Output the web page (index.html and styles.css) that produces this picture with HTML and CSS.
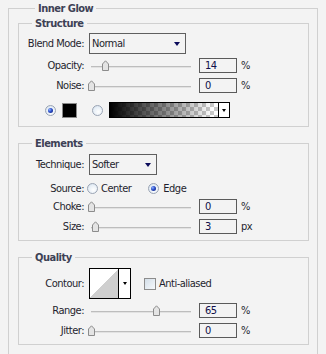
FILE: index.html
```html
<!DOCTYPE html>
<html lang="en">
<head>
    <meta charset="UTF-8">
    <title>Inner Glow</title>
    <link rel="stylesheet" href="styles.css">
</head>
<body>
    <fieldset class="group outer">
        <legend>Inner Glow</legend>

        <fieldset class="group sub structure">
            <legend>Structure</legend>
            <div class="row mt3">
                <span class="lbl">Blend Mode:</span>
                <div class="select wide"><span>Normal</span><i class="arrow"></i></div>
            </div>
            <div class="row mt4">
                <span class="lbl">Opacity:</span>
                <div class="slider"><div class="track"></div><span class="thumb" style="left:14%"><svg width="7" height="11" viewBox="0 0 7 11"><path d="M0.5 10.5V4L3.5 0.8L6.5 4V10.5Z" fill="#e4e4e4" stroke="#8c8c8c"/></svg></span></div>
                <div class="num">14</div><span class="unit">%</span>
            </div>
            <div class="row mt5">
                <span class="lbl">Noise:</span>
                <div class="slider"><div class="track"></div><span class="thumb" style="left:0%"><svg width="7" height="11" viewBox="0 0 7 11"><path d="M0.5 10.5V4L3.5 0.8L6.5 4V10.5Z" fill="#e4e4e4" stroke="#8c8c8c"/></svg></span></div>
                <div class="num">0</div><span class="unit">%</span>
            </div>
            <div class="row colors">
                <span class="radio on"></span>
                <span class="swatch"></span>
                <span class="radio gap"></span>
                <div class="gradient"><span class="ramp"></span><span class="drop"><i class="tri"></i></span></div>
            </div>
        </fieldset>

        <fieldset class="group sub elements">
            <legend>Elements</legend>
            <div class="row mt4">
                <span class="lbl">Technique:</span>
                <div class="select narrow"><span>Softer</span><i class="arrow"></i></div>
            </div>
            <div class="row source">
                <span class="lbl">Source:</span>
                <span class="radio first"></span><span class="opt">Center</span>
                <span class="radio on second"></span><span class="opt">Edge</span>
            </div>
            <div class="row mt4">
                <span class="lbl">Choke:</span>
                <div class="slider"><div class="track"></div><span class="thumb" style="left:0%"><svg width="7" height="11" viewBox="0 0 7 11"><path d="M0.5 10.5V4L3.5 0.8L6.5 4V10.5Z" fill="#e4e4e4" stroke="#8c8c8c"/></svg></span></div>
                <div class="num">0</div><span class="unit">%</span>
            </div>
            <div class="row mt5">
                <span class="lbl">Size:</span>
                <div class="slider"><div class="track"></div><span class="thumb" style="left:4%"><svg width="7" height="11" viewBox="0 0 7 11"><path d="M0.5 10.5V4L3.5 0.8L6.5 4V10.5Z" fill="#e4e4e4" stroke="#8c8c8c"/></svg></span></div>
                <div class="num">3</div><span class="unit">px</span>
            </div>
        </fieldset>

        <fieldset class="group sub quality">
            <legend>Quality</legend>
            <div class="row mt4">
                <span class="lbl">Contour:</span>
                <div class="contour"><span class="curve"></span><span class="drop"><i class="tri"></i></span></div>
                <span class="check"></span><span class="opt">Anti-aliased</span>
            </div>
            <div class="row mt4">
                <span class="lbl">Range:</span>
                <div class="slider"><div class="track"></div><span class="thumb" style="left:65%"><svg width="7" height="11" viewBox="0 0 7 11"><path d="M0.5 10.5V4L3.5 0.8L6.5 4V10.5Z" fill="#e4e4e4" stroke="#8c8c8c"/></svg></span></div>
                <div class="num">65</div><span class="unit">%</span>
            </div>
            <div class="row mt5">
                <span class="lbl">Jitter:</span>
                <div class="slider"><div class="track"></div><span class="thumb" style="left:0%"><svg width="7" height="11" viewBox="0 0 7 11"><path d="M0.5 10.5V4L3.5 0.8L6.5 4V10.5Z" fill="#e4e4e4" stroke="#8c8c8c"/></svg></span></div>
                <div class="num">0</div><span class="unit">%</span>
            </div>
        </fieldset>
    </fieldset>
</body>
</html>
```

FILE: styles.css
```css
body {
    margin: 0;
    padding-top: 2px;
    background-color: #f3f3f3;
    font-family: "DejaVu Sans Condensed", "Liberation Sans", Arial, sans-serif;
    font-stretch: semi-condensed;
    font-size: 11px;
    letter-spacing: -0.5px;
    color: #1f1f2e;
}
.group {
    margin: 0;
    min-width: 0;
    border: 1px solid #d0d0d0;
}
.group legend {
    padding: 0 3px;
    line-height: 13px;
    font-weight: bold;
    color: #3d4155;
}
.outer {
    margin-left: 8px;
    width: 310px;
    box-sizing: border-box;
    padding: 2px 8px 20px 9px;
}
.outer > legend {
    margin-left: 17px;
}
.sub {
    padding: 0 0 6px 0;
}
.sub > legend {
    margin-left: 13px;
}
.sub + .sub {
    margin-top: 10px;
}
.structure {
    padding-bottom: 8px;
}

.row {
    display: flex;
    align-items: center;
}
.mt3 { margin-top: 3px; }
.mt4 { margin-top: 4px; }
.mt5 { margin-top: 5px; }
.lbl {
    flex: none;
    width: 65px;
    text-align: right;
}

.select {
    flex: none;
    margin-left: 5px;
    height: 21px;
    box-sizing: border-box;
    display: flex;
    align-items: center;
    justify-content: space-between;
    padding: 0 5px 0 2px;
    border: 1px solid #5f5f5f;
}
.select.wide { width: 97px; }
.select.narrow { width: 68px; }
.arrow {
    width: 0;
    height: 0;
    border-top: 4px solid #0b0b5a;
    border-left: 3.5px solid transparent;
    border-right: 3.5px solid transparent;
}

.slider {
    flex: none;
    position: relative;
    width: 100px;
    height: 15px;
    margin-left: 7px;
}
.track {
    margin-top: 8px;
    border-top: 1px solid #bdbdbd;
    border-bottom: 1px solid #e2e2e2;
}
.thumb {
    position: absolute;
    top: 2px;
    margin-left: -3px;
    width: 7px;
    height: 11px;
}
.thumb svg {
    display: block;
}
.num {
    flex: none;
    margin-left: 8px;
    width: 38px;
    height: 15px;
    box-sizing: border-box;
    padding-left: 5px;
    border: 1px solid #5a5a5a;
    line-height: 13px;
    color: #10104a;
}
.unit {
    margin-left: 4px;
}

.radio {
    flex: none;
    position: relative;
    width: 11px;
    height: 11px;
    box-sizing: border-box;
    border-radius: 50%;
    border: 1px solid #9aa4b4;
    background: radial-gradient(circle at 60% 65%, #ffffff 0, #e6eef6 60%, #c9d6e4 100%);
}
.radio.on::after {
    content: "";
    position: absolute;
    left: 2px;
    top: 2px;
    width: 5px;
    height: 5px;
    border-radius: 50%;
    background: radial-gradient(circle at 35% 35%, #8fb4ff 0, #2a4cc8 45%, #0c1a6a 100%);
}

.colors {
    margin-top: 9px;
    height: 16px;
    padding-left: 26px;
}
.swatch {
    flex: none;
    margin-left: 6px;
    width: 15px;
    height: 15px;
    box-sizing: border-box;
    border: 1px solid #8a8a8a;
    background: #000;
}
.radio.gap {
    margin-left: 15px;
}
.gradient {
    flex: none;
    display: flex;
    margin-left: 6px;
    width: 121px;
    height: 16px;
    box-sizing: border-box;
    border: 1px solid #000;
}
.ramp {
    flex: 1;
    background:
        linear-gradient(to right, #000 0%, rgba(0, 0, 0, 0) 95%),
        repeating-conic-gradient(#c9c9c9 0 25%, #ffffff 0 50%) 0 0 / 8px 8px;
}
.drop {
    flex: none;
    width: 10px;
    display: flex;
    align-items: center;
    justify-content: center;
    border-left: 1px solid #000;
    background: #fff;
}
.tri {
    width: 0;
    height: 0;
    border-top: 3px solid #000;
    border-left: 2.5px solid transparent;
    border-right: 2.5px solid transparent;
}

.source {
    margin-top: 7px;
    height: 13px;
}
.radio.first {
    margin-left: 3px;
}
.radio.second {
    margin-left: 17px;
}
.opt {
    margin-left: 3px;
}
.source .radio.second + .opt {
    margin-left: 4px;
}

.contour {
    flex: none;
    display: flex;
    margin-left: 5px;
    width: 42px;
    height: 31px;
    box-sizing: border-box;
    border: 1px solid #000;
    background: #fff;
}
.curve {
    flex: 1;
    background: linear-gradient(to top left, #cfcfcf 50%, #ffffff 50%);
}
.contour .drop {
    width: 11px;
}
.check {
    flex: none;
    margin-left: 13px;
    width: 12px;
    height: 12px;
    box-sizing: border-box;
    border: 1px solid #8c8c8c;
    background: linear-gradient(135deg, #d3dee8, #f6f9fc);
}
```
